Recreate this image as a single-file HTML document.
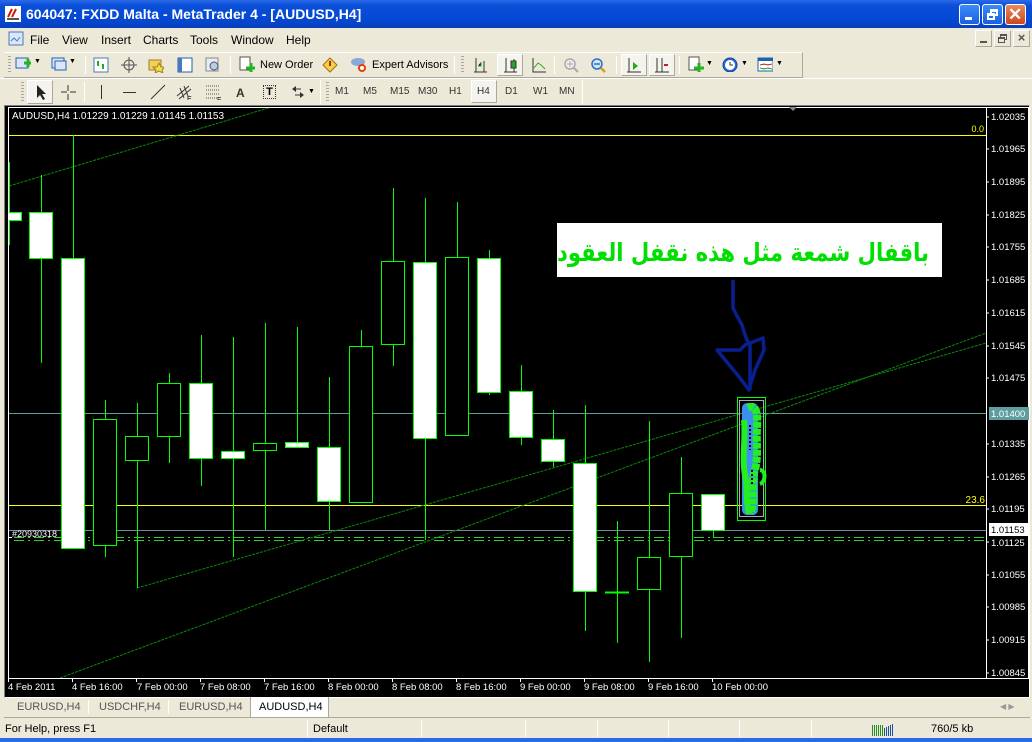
<!DOCTYPE html>
<html><head><meta charset="utf-8"><style>
*{margin:0;padding:0;box-sizing:border-box}
body{width:1032px;height:742px;overflow:hidden;background:#ece9d8;font-family:"Liberation Sans",sans-serif;font-size:11px;position:relative}
.abs{position:absolute}
#title{left:0;top:0;width:1032px;height:28px;background:linear-gradient(#2a6ae8,#0a4fd8 20%,#0548d4 70%,#0a3fb8);color:#fff;font:bold 14px "Liberation Sans",sans-serif;}
#title span{position:absolute;left:26px;top:6px}
.wb{position:absolute;top:4px;width:21px;height:21px;border:1px solid #fff;border-radius:3px;background:linear-gradient(#3d8bf8,#1a5fe0)}
.menu{top:28px;left:0;width:1032px;height:22px;font-size:12px}
.menu span{position:absolute;top:5px}
.tb{border-top:1px solid #fff;border-bottom:1px solid #aca899}
.tx{position:absolute;font-size:11px;color:#000}
.tf{position:absolute;top:86px;font-size:10px;color:#333}
.sep{position:absolute;width:1px;background:#aca899;border-right:1px solid #fff}
.grip{position:absolute;width:3px;background:repeating-linear-gradient(#aca899 0 1px,transparent 1px 3px)}
.ic{position:absolute;width:16px;height:16px}
.mb{position:absolute;top:2px;width:17px;height:17px;border:1px solid #fff;border-right-color:#aca899;border-bottom-color:#aca899}
</style></head><body>
<div id="title" class="abs"><svg class="abs" style="left:5px;top:6px" width="16" height="16"><rect width="16" height="16" fill="#fff"/><path d="M3 11 L7 3 M7 11 L11 3" stroke="#c02010" stroke-width="2"/><rect x="2" y="12" width="12" height="2" fill="#555"/></svg><span>604047: FXDD Malta - MetaTrader 4 - [AUDUSD,H4]</span>
<div class="wb" style="left:959px"><div style="position:absolute;left:5px;top:12px;width:7px;height:3px;background:#fff"></div></div>
<div class="wb" style="left:982px"><div style="position:absolute;left:7px;top:4px;width:8px;height:7px;border:2px solid #fff;border-top-width:3px"></div><div style="position:absolute;left:4px;top:8px;width:8px;height:7px;border:2px solid #fff;border-top-width:3px;background:#2a6ae8"></div></div>
<div class="wb" style="left:1005px;background:linear-gradient(#e88a5a,#d0461c)"><div style="position:absolute;left:2px;top:0;color:#fff;font:bold 17px 'Liberation Sans'">✕</div></div>
</div>
<div class="abs menu"><svg class="abs" style="left:8px;top:3px" width="16" height="16"><rect x="1" y="1" width="14" height="13" fill="#dbe6f8" stroke="#4a78c0"/><path d="M3 10 l3-3 3 3 3-4" stroke="#4a78c0" fill="none"/></svg>
<span style="left:30px">File</span><span style="left:62px">View</span><span style="left:101px">Insert</span><span style="left:143px">Charts</span><span style="left:190px">Tools</span><span style="left:231px">Window</span><span style="left:286px">Help</span>
<div class="mb" style="left:975px"><div style="position:absolute;left:4px;top:10px;width:7px;height:2px;background:#555"></div></div>
<div class="mb" style="left:994px"><div style="position:absolute;left:5px;top:3px;width:7px;height:6px;border:1px solid #555;border-top-width:2px"></div><div style="position:absolute;left:3px;top:6px;width:7px;height:6px;border:1px solid #555;border-top-width:2px;background:#ece9d8"></div></div>
<div class="mb" style="left:1013px;font:bold 13px 'Liberation Sans';color:#555;text-align:center;line-height:14px">×</div>
</div>
<!-- toolbar1 -->
<div class="abs tb" style="left:4px;top:52px;width:799px;height:26px;border-right:1px solid #aca899"></div>
<div class="abs" style="left:0;top:78px;width:1032px;height:27px;border-top:1px solid #fff"></div>
<div class="grip" style="left:8px;top:56px;height:18px"></div>
<svg class="ic" style="left:15px;top:56px" width="22" height="18"><rect x="1" y="2" width="12" height="10" fill="#dbe6f8" stroke="#2060b0"/><path d="M9 7h8M13 3v8" stroke="#22b422" stroke-width="3"/></svg>
<span class="tx" style="left:34px;top:58px;font-size:7px">▼</span>
<svg class="ic" style="left:51px;top:56px"><rect x="1" y="2" width="12" height="10" fill="#dbe6f8" stroke="#2060b0"/><rect x="4" y="5" width="11" height="9" fill="#dbe6f8" stroke="#2060b0"/></svg>
<span class="tx" style="left:69px;top:58px;font-size:7px">▼</span>
<div class="sep" style="left:85px;top:56px;height:18px"></div>
<svg class="ic" style="left:93px;top:57px"><rect x="1" y="1" width="14" height="14" fill="#fff" stroke="#4a78c0"/><path d="M5 4v5M10 7v5" stroke="#2a2" stroke-width="2"/></svg>
<svg class="ic" style="left:121px;top:57px"><circle cx="8" cy="8" r="5" fill="none" stroke="#555"/><path d="M8 0v16M0 8h16" stroke="#555"/></svg>
<svg class="ic" style="left:148px;top:57px"><rect x="1" y="3" width="12" height="10" fill="#f0d060" stroke="#a08020"/><path d="M11 6l2 4 4 0-3 3 1 3-4-2-4 2 1-3-3-3h4z" fill="#f8e040" stroke="#a08020"/></svg>
<svg class="ic" style="left:177px;top:57px"><rect x="1" y="1" width="14" height="14" fill="#fff" stroke="#2060b0"/><rect x="1" y="1" width="4" height="14" fill="#4a78c0"/></svg>
<svg class="ic" style="left:205px;top:57px"><rect x="1" y="1" width="12" height="13" fill="#e8ecf4" stroke="#888"/><circle cx="9" cy="9" r="4" fill="#bcd" stroke="#457"/></svg>
<div class="sep" style="left:230px;top:56px;height:18px"></div>
<svg class="ic" style="left:239px;top:56px" width="18" height="18"><rect x="1" y="1" width="10" height="13" fill="#fff" stroke="#555"/><path d="M7 12h10M12 7v10" stroke="#22b422" stroke-width="3"/></svg>
<span class="tx" style="left:260px;top:59px">New Order</span>
<svg class="ic" style="left:322px;top:57px"><path d="M8 1l7 7-7 7-7-7z" fill="#f8d048" stroke="#a07010"/><rect x="7" y="4" width="2" height="5" fill="#a03010"/></svg>
<svg class="ic" style="left:350px;top:56px" width="18" height="18"><ellipse cx="8" cy="6" rx="7" ry="4" fill="#8aa8d8"/><circle cx="12" cy="12" r="4" fill="#e04010"/><circle cx="12" cy="12" r="2" fill="#fff"/></svg>
<span class="tx" style="left:372px;top:59px">Expert Advisors</span>
<div class="sep" style="left:454px;top:56px;height:18px"></div>
<div class="grip" style="left:461px;top:56px;height:18px"></div>
<svg class="ic" style="left:472px;top:57px"><path d="M4 1v14M12 4v11M2 15h13" stroke="#333"/><path d="M6 9h3v-4" stroke="#2a2"/></svg>
<div class="abs" style="left:497px;top:54px;width:26px;height:22px;border:1px solid #fff;border-right-color:#aca899;border-bottom-color:#aca899;background:#f4f3ee"></div>
<svg class="ic" style="left:502px;top:57px"><path d="M4 1v14M12 2v13M2 15h13" stroke="#333"/><rect x="9" y="4" width="5" height="7" fill="#2a2" stroke="#333"/></svg>
<svg class="ic" style="left:530px;top:57px"><path d="M3 1v14h13" stroke="#333" fill="none"/><path d="M4 11l4-5 3 2 4 4" stroke="#2a2" fill="none"/></svg>
<div class="sep" style="left:554px;top:56px;height:18px"></div>
<svg class="ic" style="left:563px;top:57px"><circle cx="7" cy="7" r="5" fill="#eee" stroke="#aaa" stroke-width="1.5"/><path d="M11 11l4 4" stroke="#aaa" stroke-width="2"/><path d="M4 7h6M7 4v6" stroke="#aaa"/></svg>
<svg class="ic" style="left:590px;top:57px"><circle cx="7" cy="7" r="5" fill="#cfe4f8" stroke="#3070c0" stroke-width="1.5"/><path d="M11 11l4 4" stroke="#d0a020" stroke-width="2.5"/><path d="M4 7h6" stroke="#3070c0" stroke-width="1.5"/></svg>
<div class="sep" style="left:616px;top:56px;height:18px"></div>
<div class="abs" style="left:621px;top:54px;width:26px;height:22px;border:1px solid #fff;border-right-color:#aca899;border-bottom-color:#aca899;background:#f4f3ee"></div>
<svg class="ic" style="left:626px;top:57px"><path d="M3 1v14M1 15h14" stroke="#333"/><path d="M7 5l5 4-5 4z" fill="#2a2"/></svg>
<div class="abs" style="left:649px;top:54px;width:26px;height:22px;border:1px solid #fff;border-right-color:#aca899;border-bottom-color:#aca899;background:#f4f3ee"></div>
<svg class="ic" style="left:654px;top:57px"><path d="M3 1v14M8 1v14M1 15h14" stroke="#333"/><path d="M10 8h4" stroke="#c02020" stroke-width="2"/></svg>
<div class="sep" style="left:679px;top:56px;height:18px"></div>
<svg class="ic" style="left:688px;top:56px" width="18" height="18"><rect x="1" y="1" width="10" height="13" fill="#fff" stroke="#555"/><path d="M6 12h10M11 7v10" stroke="#22b422" stroke-width="3"/></svg>
<span class="tx" style="left:706px;top:60px;font-size:7px">▼</span>
<svg class="ic" style="left:722px;top:56px" width="18" height="18"><circle cx="8" cy="9" r="7" fill="#2a6ad8" stroke="#1040a0"/><circle cx="8" cy="9" r="5" fill="#fff"/><path d="M8 6v3h3" stroke="#333" fill="none"/></svg>
<span class="tx" style="left:741px;top:60px;font-size:7px">▼</span>
<svg class="ic" style="left:757px;top:57px" width="18" height="16"><rect x="1" y="1" width="15" height="13" fill="#fff" stroke="#2060b0"/><rect x="1" y="1" width="15" height="3" fill="#2060b0"/><path d="M3 8l4-1 4 1 4-1" stroke="#c03030"/><path d="M3 11l4 1 4-1 4 1" stroke="#2a2"/></svg>
<span class="tx" style="left:776px;top:60px;font-size:7px">▼</span>
<!-- toolbar2 -->
<div class="grip" style="left:21px;top:82px;height:20px"></div>
<div class="abs" style="left:27px;top:80px;width:26px;height:24px;border:1px solid #fff;border-right-color:#aca899;border-bottom-color:#aca899;background:#f4f3ee"></div>
<svg class="ic" style="left:33px;top:84px"><path d="M4 1v13l3-3 3 5 2-1-3-5h4z" fill="#222"/></svg>
<svg class="ic" style="left:60px;top:84px"><path d="M8 1v6M8 10v6M1 8h6M10 8h6" stroke="#333"/></svg>
<div class="sep" style="left:84px;top:82px;height:20px"></div>
<div class="abs" style="left:101px;top:85px;width:1px;height:14px;background:#333"></div>
<div class="abs" style="left:123px;top:92px;width:13px;height:1px;background:#333"></div>
<svg class="ic" style="left:150px;top:84px"><path d="M1 15L15 1" stroke="#333"/></svg>
<svg class="ic" style="left:176px;top:84px" width="18" height="18"><path d="M1 12L13 2M3 15L15 5M4 4l4 10M8 2l4 10" stroke="#333"/><text x="11" y="17" font-size="7" font-family="Liberation Sans">E</text></svg>
<svg class="ic" style="left:205px;top:84px" width="18" height="18"><path d="M1 2h14M1 6h14M1 10h14M1 14h12" stroke="#555" stroke-dasharray="1 1"/><text x="12" y="18" font-size="7" font-family="Liberation Sans">F</text></svg>
<span class="tx" style="left:236px;top:86px;font-size:12px;font-weight:bold;color:#333">A</span>
<div class="abs" style="left:263px;top:85px;width:13px;height:14px;border:1px dotted #333;font:bold 11px 'Liberation Sans';text-align:center;line-height:12px">T</div>
<svg class="ic" style="left:290px;top:84px"><path d="M2 5l4-3v6zM14 11l-4-3v6z" fill="#333"/><path d="M5 5h6M5 11h6" stroke="#333"/></svg>
<span class="tx" style="left:308px;top:88px;font-size:7px">▼</span>
<div class="sep" style="left:320px;top:80px;height:24px"></div>
<div class="grip" style="left:326px;top:82px;height:20px"></div>
<span class="tf" style="left:335px">M1</span><span class="tf" style="left:363px">M5</span><span class="tf" style="left:390px">M15</span><span class="tf" style="left:418px">M30</span><span class="tf" style="left:449px">H1</span>
<div class="abs" style="left:471px;top:80px;width:26px;height:23px;border:1px solid #fff;border-right-color:#aca899;border-bottom-color:#aca899;background:#f4f3ee"></div>
<span class="tf" style="left:477px">H4</span><span class="tf" style="left:505px">D1</span><span class="tf" style="left:533px">W1</span><span class="tf" style="left:559px">MN</span>
<div class="sep" style="left:582px;top:80px;height:24px"></div>
<!-- chart -->
<div class="abs" style="left:4px;top:105px;width:1026px;height:593px;background:#000;border:1px solid #808080;border-right-color:#fff;border-bottom-color:#fff"></div>
<svg class="abs" style="left:0;top:0" width="1032" height="742" font-family="Liberation Sans">
<defs><clipPath id="c"><rect x="9" y="108" width="977" height="570"/></clipPath></defs>
<rect x="8.5" y="107.5" width="1020" height="571" fill="none" stroke="#fff"/>
<path d="M986.5 107v571" stroke="#fff"/>
<g clip-path="url(#c)">
<line x1="9" y1="135.5" x2="986" y2="135.5" stroke="#ffff00"/>
<line x1="9" y1="413.5" x2="986" y2="413.5" stroke="#5f9ea0"/>
<line x1="9" y1="505.5" x2="986" y2="505.5" stroke="#ffff00"/>
<line x1="9" y1="530.5" x2="986" y2="530.5" stroke="#778899"/>
<line x1="14" y1="537.5" x2="986" y2="537.5" stroke="#3c3" stroke-dasharray="10 4 2 4"/>
<line x1="14" y1="540.5" x2="986" y2="540.5" stroke="#3c3" stroke-dasharray="10 4 2 4"/>
<g stroke="#0a8a0a" stroke-dasharray="3 1"><line x1="9" y1="186" x2="275" y2="106"/><line x1="137" y1="588" x2="986" y2="343"/><line x1="60" y1="678" x2="986" y2="333"/></g>
<g stroke="#00ff00" shape-rendering="crispEdges">
<path d="M9.5 162v83M41.5 175v188M73.5 135v412M105.5 400v157M137.5 403v185M169.5 373v90M201.5 335v151M233.5 337v220M265.5 323v207M297.5 327v120M329.5 377v153M361.5 330v172M393.5 188v178M425.5 198v342M457.5 202v234M489.5 250v145M521.5 365v80M553.5 410v57M585.5 405v226M617.5 521v122M649.5 421v241M681.5 457v181M713.5 494v44"/>
<g fill="#fff"><rect x="0.5" y="212.5" width="21" height="8"/><rect x="29.5" y="212.5" width="23" height="46"/><rect x="61.5" y="258.5" width="23" height="290"/><rect x="189.5" y="383.5" width="23" height="75"/><rect x="221.5" y="451.5" width="23" height="7"/><rect x="285.5" y="442.5" width="23" height="5"/><rect x="317.5" y="447.5" width="23" height="54"/><rect x="413.5" y="262.5" width="23" height="176"/><rect x="477.5" y="258.5" width="23" height="134"/><rect x="509.5" y="391.5" width="23" height="46"/><rect x="541.5" y="439.5" width="23" height="22"/><rect x="573.5" y="463.5" width="23" height="128"/><rect x="701.5" y="494.5" width="23" height="36"/></g>
<g fill="#000"><rect x="93.5" y="419.5" width="23" height="126"/><rect x="125.5" y="436.5" width="23" height="24"/><rect x="157.5" y="383.5" width="23" height="53"/><rect x="253.5" y="443.5" width="23" height="7"/><rect x="349.5" y="346.5" width="23" height="156"/><rect x="381.5" y="261.5" width="23" height="83"/><rect x="445.5" y="257.5" width="23" height="178"/><rect x="637.5" y="557.5" width="23" height="32"/><rect x="669.5" y="493.5" width="23" height="63"/></g>
<path d="M605 592.5h24" stroke-width="2"/>
<rect x="737.5" y="397.5" width="28" height="123" fill="none"/>
</g>
<rect x="739.5" y="400.5" width="24" height="116" fill="none" stroke="#aab"/>
<rect x="742" y="403" width="16" height="112" rx="5" fill="#3a8ff0"/>
<path d="M748 408c8-4 10 4 9 20-1 16 2 30-3 45-3 15 2 30-4 40" stroke="#22ee22" stroke-width="8" fill="none" stroke-dasharray="6 1"/>
<path d="M744 420c2 20-3 40 2 60 1 12 0 22 3 34" stroke="#22ee22" stroke-width="6" fill="none"/>
<path d="M760 470c6 0 6 12 0 14" stroke="#22ee22" stroke-width="4" fill="none"/>
<path d="M750 425v25M752 470v15" stroke="#000" stroke-width="2" stroke-dasharray="2 2"/>
</g>
<rect x="557" y="223" width="385" height="54" fill="#fff"/>
<text x="929" y="261" text-anchor="end" font-size="25" font-weight="bold" fill="#00e000" font-family="'DejaVu Sans',sans-serif" textLength="372" lengthAdjust="spacingAndGlyphs">باقفال شمعة مثل هذه نقفل العقود</text>
<path d="M733 280v28l4 8 5 9 3 10 3 7 M717 350l23 28 9 12 6-20 9-20-1-12-18 7-5 5h-23z M750 343v47" stroke="#0a1f8f" stroke-width="3.5" fill="none" stroke-linejoin="round"/>
<text x="12" y="119" fill="#fff" font-size="10">AUDUSD,H4  1.01229 1.01229 1.01145 1.01153</text>
<text x="984" y="132" fill="#ff0" font-size="9" text-anchor="end">0.0</text>
<text x="985" y="503" fill="#ff0" font-size="10" text-anchor="end">23.6</text>
<text x="12" y="537" fill="#fff" font-size="9">#20930318</text>
<path d="M8 537.5h4" stroke="#fff"/>
<g fill="#fff" font-size="9.5">
<text x="991" y="120">1.02035</text><text x="991" y="152">1.01965</text><text x="991" y="185">1.01895</text><text x="991" y="218">1.01825</text><text x="991" y="250">1.01755</text><text x="991" y="283">1.01685</text><text x="991" y="316">1.01615</text><text x="991" y="349">1.01545</text><text x="991" y="381">1.01475</text><text x="991" y="447">1.01335</text><text x="991" y="480">1.01265</text><text x="991" y="512">1.01195</text><text x="991" y="546">1.01125</text><text x="991" y="578">1.01055</text><text x="991" y="610">1.00985</text><text x="991" y="643">1.00915</text><text x="991" y="676">1.00845</text>
</g>
<rect x="989" y="407" width="40" height="13" fill="#5f9ea0"/><text x="991" y="417" fill="#fff" font-size="9.5">1.01400</text>
<rect x="989" y="523" width="40" height="13" fill="#fff"/><text x="991" y="533" fill="#000" font-size="9.5">1.01153</text>
<g stroke="#fff"><path d="M986 117h3M986 149h3M986 182h3M986 215h3M986 247h3M986 280h3M986 313h3M986 346h3M986 378h3M986 444h3M986 477h3M986 509h3M986 542h3M986 575h3M986 607h3M986 640h3M986 673h3"/>
<path d="M8.5 678v4M72.5 678v4M136.5 678v4M200.5 678v4M264.5 678v4M328.5 678v4M392.5 678v4M456.5 678v4M520.5 678v4M584.5 678v4M648.5 678v4M712.5 678v4"/></g>
<g fill="#fff" font-size="9.5"><text x="8" y="690">4 Feb 2011</text><text x="72" y="690">4 Feb 16:00</text><text x="137" y="690">7 Feb 00:00</text><text x="200" y="690">7 Feb 08:00</text><text x="264" y="690">7 Feb 16:00</text><text x="328" y="690">8 Feb 00:00</text><text x="392" y="690">8 Feb 08:00</text><text x="456" y="690">8 Feb 16:00</text><text x="520" y="690">9 Feb 00:00</text><text x="584" y="690">9 Feb 08:00</text><text x="648" y="690">9 Feb 16:00</text><text x="712" y="690">10 Feb 00:00</text></g>
<path d="M789 107l4 4 4-4z" fill="#888"/>
</svg>
<!-- tabs -->
<div class="abs" style="left:4px;top:698px;width:1026px;height:20px;border-bottom:1px solid #aca899"></div>
<span class="tx" style="left:17px;top:701px;color:#555">EURUSD,H4</span>
<div class="sep" style="left:88px;top:700px;height:14px"></div>
<span class="tx" style="left:99px;top:701px;color:#555">USDCHF,H4</span>
<div class="sep" style="left:168px;top:700px;height:14px"></div>
<span class="tx" style="left:179px;top:701px;color:#555">EURUSD,H4</span>
<div class="abs" style="left:250px;top:697px;width:79px;height:21px;background:#fff;border:1px solid #aca899;border-top:none"></div>
<span class="tx" style="left:259px;top:701px">AUDUSD,H4</span>
<span class="tx" style="left:1000px;top:702px;color:#999;font-size:8px">◀ ▶</span>
<!-- status -->
<span class="tx" style="left:5px;top:723px">For Help, press F1</span>
<div class="sep" style="left:307px;top:720px;height:17px"></div>
<span class="tx" style="left:313px;top:723px">Default</span>
<div class="sep" style="left:421px;top:720px;height:17px"></div><div class="sep" style="left:525px;top:720px;height:17px"></div><div class="sep" style="left:597px;top:720px;height:17px"></div><div class="sep" style="left:668px;top:720px;height:17px"></div><div class="sep" style="left:739px;top:720px;height:17px"></div><div class="sep" style="left:811px;top:720px;height:17px"></div>
<svg class="abs" style="left:871px;top:722px" width="24" height="14"><g stroke="#2a8a2a"><path d="M1.5 14V3M3.5 14V3M5.5 14V3M7.5 14V3M9.5 14V3M11.5 14V3"/></g><g stroke="#2050a0"><path d="M13.5 14V6M15.5 14V5M17.5 14V4M19.5 14V3M21.5 14V2"/></g></svg>
<span class="tx" style="left:931px;top:723px">760/5 kb</span>
<div class="abs" style="left:0;top:738px;width:1032px;height:4px;background:#2a6ae8"></div>
</body></html>
